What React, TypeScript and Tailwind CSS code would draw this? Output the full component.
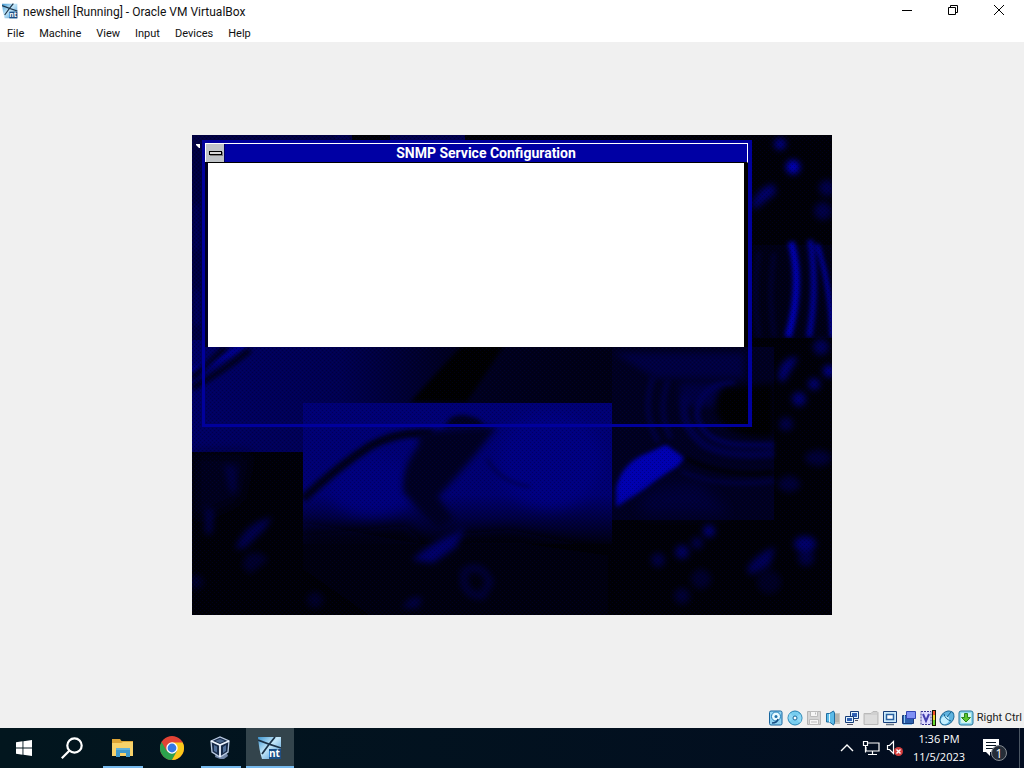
import type { ReactNode } from "react";
import { clsx } from "clsx";

const menus = ["File", "Machine", "View", "Input", "Devices", "Help"];

function NtIcon({ className, id }: { className?: string; id: string }) {
    return (
        <svg viewBox="0 0 24 24" className={className} aria-hidden="true">
            <defs>
                <linearGradient id={id} x1="0" y1="0" x2="1" y2="1">
                    <stop offset="0" stopColor="#3d95d0" />
                    <stop offset="0.45" stopColor="#c4e8fa" />
                    <stop offset="1" stopColor="#3f8ccb" />
                </linearGradient>
            </defs>
            <path d="M0 1h23v22H4Q1 14 0 1z" fill={`url(#${id})`} />
            <path d="M0 4Q10 8 23 12M17 1Q11 8 4 18" stroke="#1b3247" strokeWidth="1.800" fill="none" />
            <path d="M11 13h12v10H11z" fill="#1c4f85" />
            <text x="11" y="21" fontSize="10" fontWeight="bold" fill="#fff" fontFamily="Open Sans, sans-serif">nt</text>
        </svg>
    );
}

function Wallpaper() {
    return (
        <svg viewBox="192 135 640 480" className="absolute inset-0 h-full w-full" aria-hidden="true">
            <defs>
                <filter id="soft" x="-30%" y="-30%" width="160%" height="160%">
                    <feGaussianBlur stdDeviation="2" />
                </filter>
                <filter id="softer" x="-30%" y="-30%" width="160%" height="160%">
                    <feGaussianBlur stdDeviation="3" />
                </filter>
                <filter id="haze" x="-50%" y="-50%" width="200%" height="200%">
                    <feGaussianBlur stdDeviation="7" />
                </filter>
                <linearGradient id="upper" x1="0" x2="1">
                    <stop offset="0" stopColor="#000064" />
                    <stop offset="0.35" stopColor="#000050" />
                    <stop offset="0.6" stopColor="#000020" />
                    <stop offset="1" stopColor="#000014" />
                </linearGradient>
                <linearGradient id="panel" x1="0" x2="0" y1="0" y2="1">
                    <stop offset="0" stopColor="#000074" />
                    <stop offset="0.65" stopColor="#000070" />
                    <stop offset="1" stopColor="#000010" />
                </linearGradient>
                <pattern id="dither" width="4" height="4" patternUnits="userSpaceOnUse">
                    <path d="M0 0h1v1H0zM2 2h1v1H2z" fill="#000" fillOpacity="0.25" />
                    <path d="M2 0h1v1H2zM0 2h1v1H0z" fill="#0000c0" fillOpacity="0.12" />
                </pattern>
                <clipPath id="panelClip">
                    <path d="M303 403h309v141H303z" />
                </clipPath>
            </defs>
            <path d="M192 135h640v480H192z" fill="#000006" />
            {/* strip along the top and left */}
            <path d="M192 135h160v8H192zM192 135h12v210h-12z" fill="#000040" />
            <path d="M335 135h14v4h-14zM390 135h75v5h-75z" fill="#00004a" />
            <path d="M194 205h5v45h-5zM194 290h6v35h-6z" fill="#000058" filter="url(#soft)" />
            {/* upper sheet */}
            <path d="M192 340h422v65H303v47H192z" fill="url(#upper)" />
            <path d="M192 371Q218 362 245 344" stroke="#000098" strokeWidth="5" fill="none" filter="url(#soft)" />
            <path d="M192 388Q220 373 250 350M192 378Q212 360 226 347" stroke="#000010" strokeWidth="5" fill="none" filter="url(#soft)" />
            <path d="M463 344h42l-38 58h-57z" fill="#000002" filter="url(#soft)" />
            {/* middle panel */}
            <path d="M303 403h309v141H303z" fill="url(#panel)" />
            <g clipPath="url(#panelClip)">
                <ellipse cx="373" cy="486" rx="45" ry="30" fill="#00007c" filter="url(#haze)" />
                <ellipse cx="550" cy="460" rx="52" ry="48" fill="#000080" filter="url(#haze)" />
                <path d="M303 499Q338 466 370 446Q400 430 432 434" stroke="#000018" strokeWidth="8" fill="none" filter="url(#soft)" />
                <path d="M418 446Q401 468 403 492L424 516L438 529L454 520L438 497L475 455L497 427L470 428L420 432z" fill="#000024" filter="url(#softer)" />
                <path d="M450 418q12-7 30 2l6 8h-42z" fill="#000024" filter="url(#soft)" />
                <path d="M303 536L405 526L432 550H303zM460 534l50-4 102 22v6H450z" fill="#000010" filter="url(#haze)" />
                <path d="M487 459q12 23 43 28" stroke="#000040" strokeWidth="2" fill="none" filter="url(#soft)" />
            </g>
            <path d="M303 522v48l65 45h240v-60l-90-13-95 2z" fill="#00000c" fillOpacity="0.6" filter="url(#haze)" />
            <path d="M412 560q22-20 44-27l9-6-9 20-23 16z" fill="#000066" filter="url(#softer)" />
            <path d="M464 572q10-8 20 0l6 10-8 14q-14 0-18-12z" stroke="#000038" strokeWidth="7" fill="none" filter="url(#softer)" />
            <path d="M402 608q10-15 20-10l-4 10z" fill="#000040" filter="url(#softer)" />
            {/* lower left leaf shadows */}
            <path d="M192 452h110v163H192z" fill="#000006" />
            <path d="M195 455h55l-10 45-45 20z" fill="#00001a" filter="url(#haze)" />
            <g fill="#00004c" filter="url(#softer)">
                <path d="M235 549q10-27 37-32l-7 12-20 19z" />
                <path d="M205 507l9 3-2 24h-7zM224 465l12 1 0 28-6-3z" fill="#000040" />
                <path d="M246 555q15-7 22 5l-18 14-8-8z" fill="#00002c" />
                <circle cx="196" cy="582" r="7" fill="#00002c" />
                <circle cx="315" cy="600" r="8" fill="#000028" />
            </g>
            {/* ringed disc */}
            <path d="M612 347h162v173H612z" fill="#000020" />
            <path d="M614 353h130v25H655zM680 383h45v23h-45z" fill="#000040" filter="url(#softer)" />
            <g fill="none" filter="url(#soft)">
                <path d="M653 377q-12 35 5 65M668 380q-11 33 3 58" stroke="#000040" strokeWidth="5" />
                <path d="M735 383q-37 1-38 32 5 31 55 30h22" stroke="#000054" strokeWidth="5" />
                <path d="M686 395q-9 30 20 51 24 12 68 7" stroke="#000046" strokeWidth="8" />
                <path d="M685 458q38 20 89 14" stroke="#000004" strokeWidth="4" />
                <path d="M681 471q35 17 93 10" stroke="#000040" strokeWidth="4" />
            </g>
            <path d="M722 388l52-4v52q-30 4-50-10-16-20-2-38z" fill="#000003" filter="url(#softer)" />
            <path d="M616 488Q622 462 648 453L666 445L684 458L678 466Q655 480 645 489L616 507z" fill="#0000aa" filter="url(#soft)" />
            <path d="M619 491Q623 467 648 456L666 447L681 459L647 484L633 493z" fill="#0000b0" filter="url(#soft)" />
            <path d="M640 500q20-18 60-17l30 31h-87z" fill="#000038" filter="url(#haze)" />
            {/* right column */}
            <path d="M753 245h79v93h-79z" fill="#000014" />
            <g fill="none" stroke="#0000b0" filter="url(#soft)">
                <path d="M791 242Q803 285 788 337" strokeWidth="7" />
                <path d="M810 240Q818 285 809 337" strokeWidth="6" stroke="#000090" />
                <path d="M817 244Q831 286 832 337" strokeWidth="4" />
                <path d="M759 252q-7 40 0 85M774 253q-6 40 0 84" strokeWidth="4" stroke="#000030" />
            </g>
            <path d="M753 338h79v5h-79z" fill="#000004" />
            <g fill="#0000b8" filter="url(#softer)">
                <circle cx="793" cy="167" r="7" />
                <circle cx="780" cy="144" r="6" fill="#000080" />
                <path d="M752 203q7-17 22-19l2 9-22 17z" fill="#000068" />
                <circle cx="827" cy="188" r="8" fill="#000048" />
                <circle cx="823" cy="211" r="9" fill="#000044" />
                <path d="M778 378q2-22 20-21l-7 13-8 13z" fill="#000070" />
                <circle cx="821" cy="347" r="8" fill="#000054" />
                <circle cx="829" cy="371" r="6" fill="#000088" />
                <circle cx="814" cy="384" r="6" fill="#000070" />
                <circle cx="799" cy="399" r="7" fill="#000070" />
                <circle cx="786" cy="424" r="7" fill="#000044" />
                <ellipse cx="818" cy="458" rx="13" ry="8" fill="#000034" />
                <ellipse cx="789" cy="484" rx="11" ry="8" fill="#000036" />
                <circle cx="709" cy="531" r="6" fill="#000070" />
                <circle cx="697" cy="543" r="6" fill="#000044" />
                <circle cx="682" cy="552" r="7" fill="#00005c" />
                <circle cx="658" cy="560" r="7" fill="#000040" />
                <path d="M747 569q8-16 28-22l-5 18-20 10z" fill="#000054" />
                <ellipse cx="805" cy="544" rx="11" ry="8" fill="#000068" />
                <circle cx="806" cy="558" r="8" fill="#000040" />
                <circle cx="701" cy="579" r="10" fill="#00002c" />
                <circle cx="682" cy="596" r="8" fill="#000030" />
                <circle cx="769" cy="582" r="12" fill="#000024" />
            </g>
            <path d="M192 135h640v480H192z" fill="url(#dither)" />
            <path d="M196 144h4v4h-1l-3-3z" fill="#fff" />
        </svg>
    );
}

function SnmpWindow() {
    return (
        <section className="absolute left-[10px] top-[5px] h-[287px] w-[550px] border-[3px] border-r-4 border-[#00009c]">
            <header className="flex h-[20px] border-r border-t border-b border-b-black border-r-white border-t-white bg-[#0000a4]">
                <button aria-label="Control menu" className="flex w-[20px] items-center justify-center border-l border-white border-r border-r-[#000060] bg-[#c0c4c8]">
                    <span className="h-[4px] w-[13px] border border-black bg-[#d8d8d8] shadow-[1px_1px_0_#808080]" />
                </button>
                <h1 className="flex-1 text-center font-[Roboto] text-[14px] font-bold leading-[19px] text-white">
                    SNMP Service Configuration
                </h1>
            </header>
            <div className="flex h-[184px]">
                <div className="w-[3px] bg-[#000020]" />
                <div className="flex-1 bg-white" />
                <div className="w-[4px] bg-black" />
            </div>
        </section>
    );
}

function StatusIcon({ label, children }: { label: string; children: ReactNode }) {
    return (
        <button aria-label={label} className="h-4 w-4">
            <svg viewBox="0 0 16 16" className="h-4 w-4">{children}</svg>
        </button>
    );
}

function StatusBar() {
    return (
        <footer className="flex h-[20px] items-center justify-end gap-[3px] bg-[#f0f0f0] pr-[2px]">
            <StatusIcon label="Hard disks">
                <rect x="1.500" y="1" width="12.500" height="14" rx="1.500" fill="#8fd2f3" stroke="#17659e" />
                <circle cx="8" cy="6.500" r="4.500" fill="#e8faff" stroke="#2482bb" />
                <circle cx="8" cy="6.500" r="1.500" fill="#1d6fa8" />
                <path d="M4 13q5 0 6-4" stroke="#164d82" strokeWidth="1.500" fill="none" />
            </StatusIcon>
            <StatusIcon label="Optical drives">
                <circle cx="8" cy="8" r="7" fill="#77cdef" stroke="#2380b0" />
                <path d="M8 8L3 3q-3 5 0 8zM8 8l5 5q3-5 0-9z" fill="#8fd8f5" />
                <circle cx="8" cy="8" r="2" fill="#fff" stroke="#176799" />
            </StatusIcon>
            <StatusIcon label="Floppy drives">
                <path d="M1.500 1.500h13v13h-13z" fill="#d5d5d5" stroke="#b4b4b4" />
                <path d="M4.500 1.500h7v5h-7zM3.500 9.500h9v5h-9z" fill="#f6f6f6" stroke="#bcbcbc" />
                <path d="M9.500 2.500v2M5 12h6" stroke="#bbb" />
            </StatusIcon>
            <StatusIcon label="Audio">
                <path d="M8 3h7v11H8z" fill="#c8c8c2" />
                <path d="M10 5h4M10 7h4M10 9h4M10 11h4" stroke="#a0a09a" />
                <path d="M1.500 3.500h3l4-2.500 1 2v10l-1 2-4-3h-3z" fill="#5bbbe8" stroke="#1e6da0" />
                <path d="M4.500 4v8" stroke="#e0f8ff" />
            </StatusIcon>
            <StatusIcon label="Network">
                <path d="M6.500 1.500h8v7h-8z" fill="#e2f4ff" stroke="#153c79" />
                <path d="M8 3h5v4H8z" fill="#2f60b4" />
                <path d="M1.500 6.500h8v6h-8z" fill="#e2f4ff" stroke="#153c79" />
                <path d="M3 8h5v3H3z" fill="#2f60b4" />
                <path d="M3 14.500h6M11 10.500h3" stroke="#556" />
            </StatusIcon>
            <StatusIcon label="Shared folders">
                <path d="M1 3.500h7l2-2h4l1 1v12H1z" fill="#d0d0d0" stroke="#bababa" />
                <path d="M2 5h12v9H2z" fill="#dcdcdc" />
            </StatusIcon>
            <StatusIcon label="Display">
                <path d="M1.500 1.500h13v11h-13z" fill="#cceafa" stroke="#173f7c" />
                <path d="M4.500 4.500h7v5h-7z" fill="#fff" stroke="#2861a2" strokeWidth="1.500" />
                <path d="M4 14.500h8" stroke="#678" strokeWidth="1.500" />
            </StatusIcon>
            <StatusIcon label="Recording">
                <path d="M1.500 5.500h11v8h-11z" fill="#2b5fac" stroke="#183b7a" />
                <path d="M5.500 1.500h9v7h-9z" fill="#7f90f4" stroke="#3446b5" />
                <path d="M3.500 5v8M2 14.500h9" stroke="#8ec7f0" />
            </StatusIcon>
            <StatusIcon label="Features">
                <path d="M1 1.500h10v13H1z" fill="#dedbff" stroke="#3a3794" strokeDasharray="2 1" />
                <path d="M3 4l3 7 3-7" fill="none" stroke="#443fb0" strokeWidth="2" />
                <path d="M12 0h4v16h-4z" fill="#181800" />
                <path d="M13 1h2v5h-2z" fill="#f3502c" />
                <path d="M13 5h2v5h-2z" fill="#eed62c" />
                <path d="M13 10h2v5h-2z" fill="#65d831" />
            </StatusIcon>
            <StatusIcon label="Mouse integration">
                <ellipse cx="8" cy="8" rx="6" ry="8" transform="rotate(45 8 8)" fill="#5fb4e0" stroke="#1d6794" />
                <ellipse cx="6" cy="10" rx="4" ry="4.500" transform="rotate(45 6 10)" fill="#c3efff" />
                <path d="M5 4q1 5 7 7M8 7l4-5" stroke="#17618d" fill="none" />
            </StatusIcon>
            <StatusIcon label="Keyboard">
                <rect x="1" y="1" width="14" height="14" rx="2" fill="#8ed6ee" stroke="#27759a" />
                <rect x="3" y="3" width="10" height="10" rx="1" fill="#d5f6ea" />
                <path d="M6.500 3.500h3v4h3L8 12 3.500 7.500h3z" fill="#5bc52c" stroke="#28851c" />
            </StatusIcon>
            <span className="font-[Roboto] text-[11px] leading-4 text-[#202020]">Right Ctrl</span>
        </footer>
    );
}

function TaskButton({ label, running, active, children }: {
    label: string;
    running?: boolean;
    active?: boolean;
    children: ReactNode;
}) {
    return (
        <button
            aria-label={label}
            className={clsx("relative flex h-10 w-12 items-center justify-center", active && "bg-[#33444c]")}
        >
            {children}
            {(running || active) && (
                <span className={clsx("absolute bottom-0 h-[2px] bg-[#76b9ed]", active ? "w-12" : "w-10")} />
            )}
        </button>
    );
}

function Taskbar() {
    return (
        <nav className="flex h-10 justify-between bg-linear-to-r from-[#02161e] to-[#020c20] text-white">
            <div className="flex">
                <TaskButton label="Start">
                    <svg viewBox="0 0 16 16" className="h-4 w-4" fill="#fff">
                        <path d="M0 2.200l6.500-.9v6.200H0zM7.400 1.200L16 0v7.500H7.400zM0 8.400h6.500v6.300L0 13.800zM7.400 8.400H16V16l-8.600-1.200z" />
                    </svg>
                </TaskButton>
                <TaskButton label="Search">
                    <svg viewBox="0 0 22 22" className="h-[22px] w-[22px]" fill="none" stroke="#fff" strokeWidth="2.200">
                        <circle cx="13.500" cy="8.500" r="7.200" />
                        <path d="M8.500 13.500L0.800 21.200" />
                    </svg>
                </TaskButton>
                <div className="flex gap-px pl-[3px]">
                    <TaskButton label="File Explorer" running>
                        <svg viewBox="0 0 24 24" className="h-6 w-6">
                            <path d="M1 3h8l1.500 2H22v5H1z" fill="#dda536" />
                            <path d="M1 7h9l2-1h10v14H1z" fill="#f8d26a" />
                            <path d="M5 12h14v9h-4v-4H9v4H5z" fill="#3f99cc" />
                            <path d="M5 12h14v2H5z" fill="#62b1da" />
                        </svg>
                    </TaskButton>
                    <TaskButton label="Google Chrome">
                        <svg viewBox="0 0 24 24" className="h-6 w-6">
                            <circle cx="12" cy="12" r="12" fill="#e24335" />
                            <path d="M1.600 6A12 12 0 0 0 12 24l5.200-9L12 17.500 6.800 15z" fill="#2da14d" />
                            <path d="M12 6.500h10.700A12 12 0 0 1 12 24l5-9z" fill="#fbc91b" />
                            <circle cx="12" cy="12" r="5.700" fill="#fff" />
                            <circle cx="12" cy="12" r="4.400" fill="#3478e5" />
                        </svg>
                    </TaskButton>
                    <TaskButton label="Oracle VM VirtualBox" running>
                        <svg viewBox="0 0 24 24" className="h-6 w-6">
                            <path d="M7 16l-1 5 5 2h4l4-3-2-5z" fill="#7186a7" />
                            <path d="M2 5l9-4 9 4-1 11-8 5-8-5z" fill="#172b49" stroke="#b9cae2" strokeWidth="1.300" />
                            <path d="M2 5l9 4 9-4M11 9v12" fill="none" stroke="#eef6ff" strokeWidth="1.800" />
                            <path d="M6 5l5-2 5 2-5 2z" fill="#48658b" />
                            <path d="M5 9l3 1.500v6L5 15zM14 11l3-2v6l-3 2z" fill="#506f98" />
                        </svg>
                    </TaskButton>
                    <TaskButton label="newshell" active>
                        <NtIcon id="nt-task" className="h-6 w-6" />
                    </TaskButton>
                </div>
            </div>
            <div className="flex items-center">
                <button aria-label="Show hidden icons" className="flex w-6 justify-center">
                    <svg viewBox="0 0 14 8" className="h-2 w-[14px]" fill="none" stroke="#fff" strokeWidth="1.400">
                        <path d="M1 7l6-6 6 6" />
                    </svg>
                </button>
                <button aria-label="Network" className="flex w-6 justify-center">
                    <svg viewBox="0 0 18 16" className="h-4 w-[18px]" fill="none" stroke="#fff" strokeWidth="1.200">
                        <path d="M6 3h11v8H4V7M10.500 11v3M6 14.500h9M1.500 1.500h4v4h-4zM3.500 6v6.500" />
                    </svg>
                </button>
                <button aria-label="Volume" className="flex w-6 justify-center">
                    <svg viewBox="0 0 18 16" className="h-4 w-[18px]">
                        <path d="M1.500 5.500h2l4-4v12l-4-4h-2z" fill="none" stroke="#fff" strokeWidth="1.200" />
                        <circle cx="12.500" cy="11.500" r="4.500" fill="#d43d3d" />
                        <path d="M10.500 9.500l4 4M14.500 9.500l-4 4" stroke="#fff" strokeWidth="1.400" />
                    </svg>
                </button>
                <button className="w-16 text-center font-['Open_Sans'] text-[11px] leading-[18px]">
                    <span className="block">1:36 PM</span>
                    <span className="block">11/5/2023</span>
                </button>
                <button aria-label="1 notification" className="flex w-12 justify-center">
                    <svg viewBox="0 0 26 26" className="h-[26px] w-[26px]">
                        <path d="M1 4h16v13H8v4l-4-4H1z" fill="#fff" />
                        <path d="M4 7.500h10M4 10.500h10M4 13.500h8" stroke="#071522" strokeWidth="1.200" />
                        <circle cx="17" cy="18" r="7.500" fill="#252d38" stroke="#858b92" />
                        <text x="17" y="22.500" textAnchor="middle" fontSize="12" fill="#fff" fontFamily="Open Sans, sans-serif">1</text>
                    </svg>
                </button>
                <button aria-label="Show desktop" className="h-10 w-[5px] border-l border-[#4b5663]" />
            </div>
        </nav>
    );
}

export default function App() {
    return (
        <div className="flex min-h-screen flex-col bg-[#f0f0f0] font-[Roboto] text-[#111]">
            <header className="flex h-6 bg-white px-[2px]">
                <NtIcon id="nt-title" className="mt-[3px] h-4 w-4" />
                <span className="ml-[5px] flex-1 text-[12px] leading-6">
                    newshell [Running] - Oracle VM VirtualBox
                </span>
                <button aria-label="Minimize" className="flex h-5 w-[46px] items-center justify-center">
                    <svg viewBox="0 0 10 10" className="h-[10px] w-[10px]"><path d="M0 5h10v1H0z" /></svg>
                </button>
                <button aria-label="Restore" className="flex h-5 w-[46px] items-center justify-center">
                    <svg viewBox="0 0 10 10" className="h-[10px] w-[10px]" fill="none" stroke="#000">
                        <path d="M.5 2.500h7v7h-7zM2.500 2.500v-2h7v7h-2" />
                    </svg>
                </button>
                <button aria-label="Close" className="flex h-5 w-[46px] items-center justify-center">
                    <svg viewBox="0 0 10 10" className="h-[10px] w-[10px]" stroke="#000">
                        <path d="M0 0l10 10M10 0L0 10" />
                    </svg>
                </button>
            </header>
            <nav className="flex h-[18px] gap-[15px] bg-white pl-[7px]">
                {menus.map((menu) => (
                    <button key={menu} className="text-[11px] leading-5">{menu}</button>
                ))}
            </nav>
            <main className="flex flex-1 items-center justify-center">
                <div className="relative h-[480px] w-[640px] overflow-hidden bg-black">
                    <Wallpaper />
                    <SnmpWindow />
                </div>
            </main>
            <StatusBar />
            <Taskbar />
        </div>
    );
}
